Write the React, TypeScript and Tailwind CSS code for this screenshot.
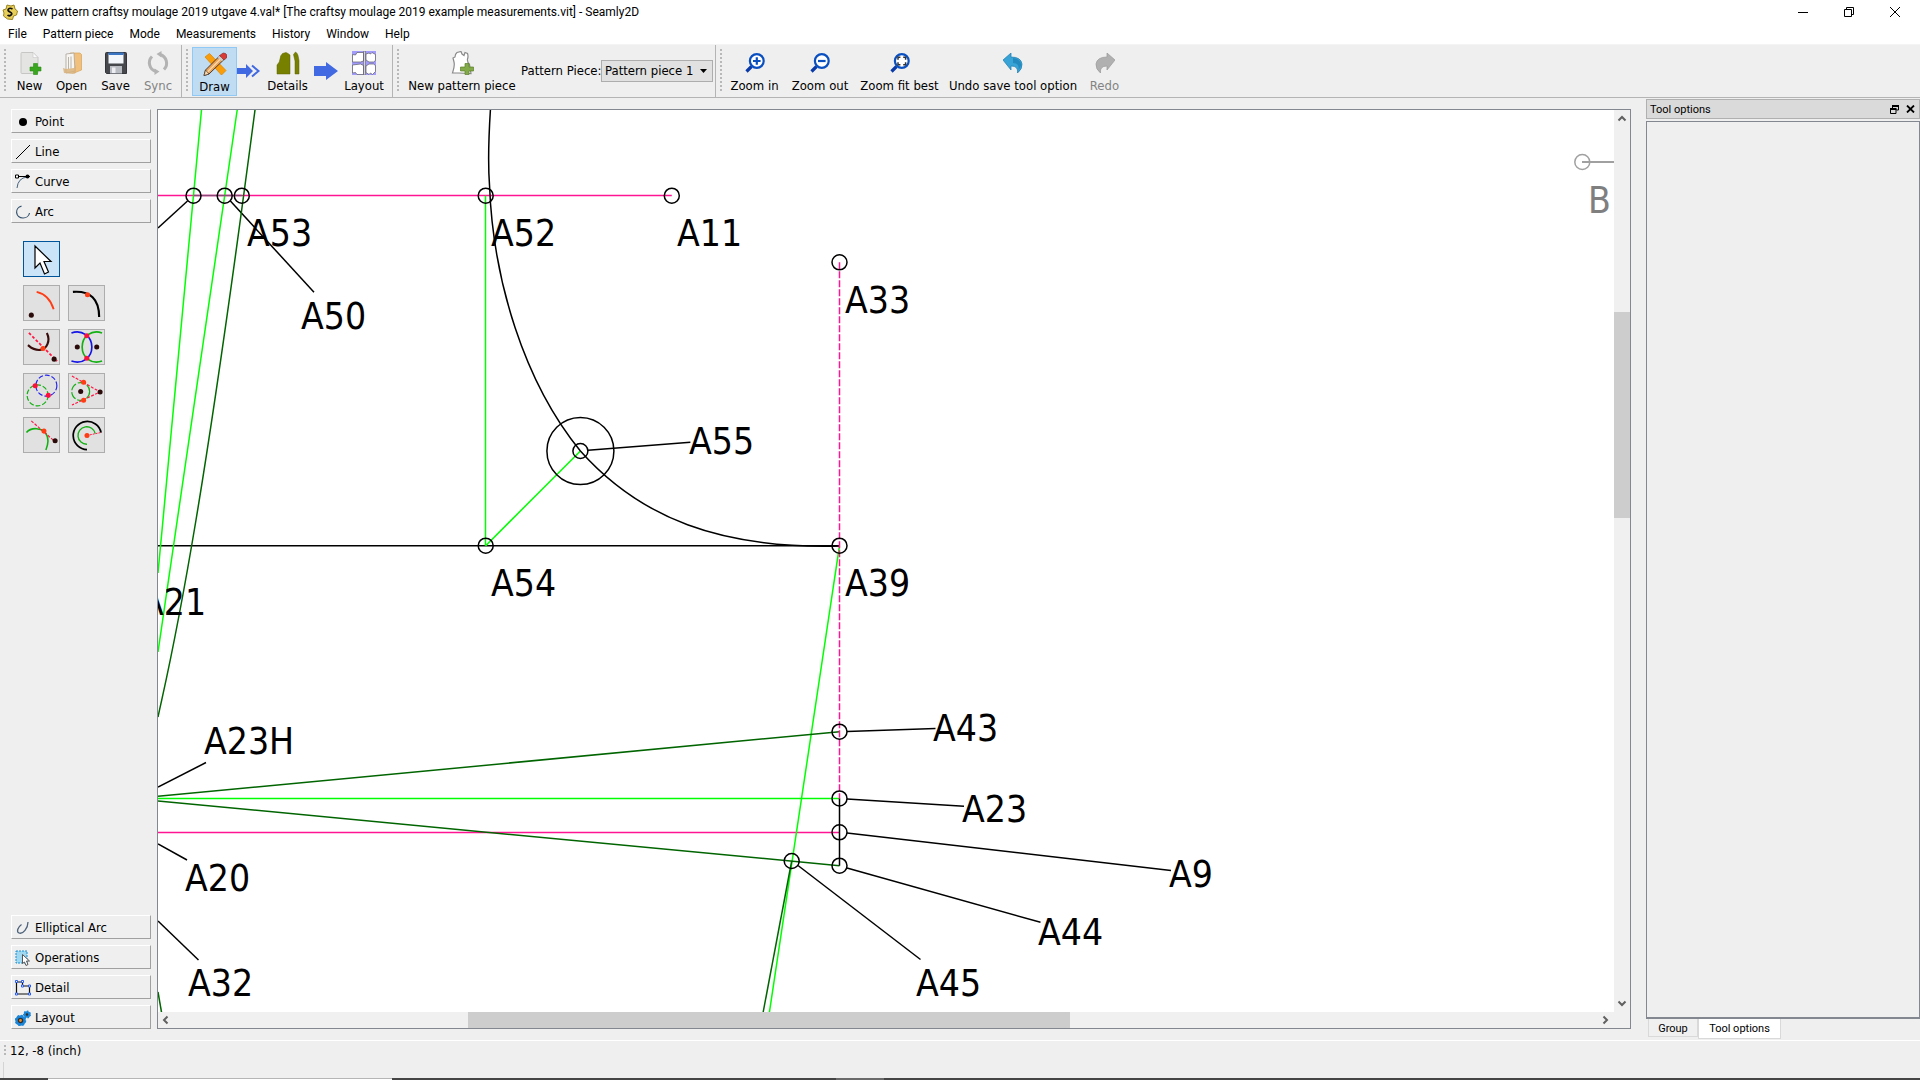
import { useState } from 'react'
import type { ReactNode } from 'react'
import clsx from 'clsx'

const MENUS = ['File', 'Pattern piece', 'Mode', 'Measurements', 'History', 'Window', 'Help']

type Stroke = 'black' | 'pink' | 'green' | 'darkgreen'

const STROKES: Record<Stroke, string> = {
  black: '#000000',
  pink: '#ff1493',
  green: '#00ff00',
  darkgreen: '#006400',
}

// x1, y1, x2, y2 in scene pixels
const LINES: { color: Stroke; at: number[] }[] = [
  { color: 'pink', at: [150, 195.5, 671.8, 195.5] },
  { color: 'pink', at: [150, 832.5, 839.5, 832.5] },
  { color: 'black', at: [150, 545.7, 839.5, 545.7] },
  { color: 'green', at: [201.5, 110, 158, 573] },
  { color: 'green', at: [237.2, 110, 158, 652] },
  { color: 'green', at: [485.5, 195.7, 485.5, 545.7] },
  { color: 'green', at: [485.7, 545.7, 580.4, 451] },
  { color: 'green', at: [150, 798.5, 839.5, 798.5] },
  { color: 'green', at: [839.5, 545.7, 769, 1015] },
  { color: 'darkgreen', at: [839.5, 731.7, 158, 796.3] },
  { color: 'darkgreen', at: [839.5, 865.7, 158, 801] },
  { color: 'darkgreen', at: [791.7, 861, 763, 1013] },
  { color: 'darkgreen', at: [158, 992, 162, 1015] },
  { color: 'black', at: [839.5, 798.4, 839.5, 865.7] },
  // label leaders
  { color: 'black', at: [187.5, 201, 158, 228] },
  { color: 'black', at: [230.4, 201, 314, 292.3] },
  { color: 'black', at: [588, 450.3, 690.4, 442.3] },
  { color: 'black', at: [847, 731.5, 935.5, 728.5] },
  { color: 'black', at: [847, 799, 964, 806.3] },
  { color: 'black', at: [847, 833, 1171, 870.5] },
  { color: 'black', at: [847, 868, 1040.5, 922.3] },
  { color: 'black', at: [798, 865.5, 920.5, 959.5] },
  { color: 'black', at: [158, 787, 206, 762.5] },
  { color: 'black', at: [158, 844, 187, 860] },
  { color: 'black', at: [158, 921, 198.5, 960] },
]

const POINTS = [
  [193.5, 195.7],
  [224.7, 195.7],
  [241.8, 195.7],
  [485.7, 195.7],
  [671.8, 195.7],
  [839.5, 262.3],
  [485.7, 545.7],
  [580.4, 451],
  [839.5, 545.7],
  [839.5, 731.7],
  [839.5, 798.4],
  [839.5, 832.3],
  [839.5, 865.7],
  [791.7, 861],
]

const LABELS = [
  { text: 'A53', x: 247, y: 246 },
  { text: 'A52', x: 491, y: 246 },
  { text: 'A11', x: 677, y: 246 },
  { text: 'A50', x: 301, y: 329 },
  { text: 'A33', x: 845, y: 313 },
  { text: 'A55', x: 689, y: 454 },
  { text: 'A54', x: 491, y: 596 },
  { text: 'A39', x: 845, y: 596 },
  { text: 'A21', x: 141, y: 615 },
  { text: 'A23H', x: 204, y: 754 },
  { text: 'A20', x: 185, y: 891 },
  { text: 'A32', x: 188, y: 996 },
  { text: 'A43', x: 933, y: 741 },
  { text: 'A23', x: 962, y: 822 },
  { text: 'A9', x: 1169, y: 887 },
  { text: 'A44', x: 1038, y: 945 },
  { text: 'A45', x: 916, y: 996 },
]

function Icon({ size = 24, box = '0 0 24 24', children }: { size?: number; box?: string; children: ReactNode }) {
  return (
    <svg width={size} height={size} viewBox={box} fill="none" className="shrink-0" aria-hidden="true">
      {children}
    </svg>
  )
}

/* ---------- toolbar icons ---------- */

const NewIcon = () => (
  <Icon>
    <path d="M3 2.500a1 1 0 0 1 1-1h11l5 5v15a1 1 0 0 1-1 1H4a1 1 0 0 1-1-1z" fill="#e4e4e2" stroke="#bdbdbb" strokeWidth=".8" />
    <path d="M15 1.500v5h5z" fill="#fafafa" stroke="#c8c8c8" strokeWidth=".6" />
    <path d="M15.500 12.500h4v3.500H23v4h-3.500V23.500h-4V20H12v-4h3.500z" fill="#3aa51f" stroke="#2a8a14" strokeWidth=".6" />
  </Icon>
)

const OpenIcon = () => (
  <Icon>
    <path d="M10 2h10l1.500 1.500V19L14 22z" fill="#f0c07c" stroke="#d9a45c" strokeWidth=".7" />
    <path d="M6 3l8-1 1 18-9 2z" fill="#f6f5f2" stroke="#a9a298" strokeWidth=".8" />
    <path d="M8.500 6v12M11 5.500v12" stroke="#b9b4ab" />
    <path d="M3 17l3 1 8-1 2-3v8l-3 1L4 22z" fill="#d9b27a" opacity=".85" />
  </Icon>
)

const SaveIcon = () => (
  <Icon>
    <path d="M1.500 2.500a1 1 0 0 1 1-1h19a1 1 0 0 1 1 1v20h-20l-1-1z" fill="#46484d" stroke="#33353a" />
    <path d="M4.500 2.500h15v10h-15z" fill="#f3f6fa" />
    <path d="M4.500 1.500h15V4h-15z" fill="#3b76c4" />
    <path d="M6 15h12v7.500H6z" fill="#b9bcc3" />
    <path d="M8 16.500h3.500V22H8z" fill="#eceef2" />
  </Icon>
)

const SyncIcon = () => (
  <Icon>
    <path d="M10 20.500A9 9 0 0 1 6 5.500" stroke="#b3b3b3" strokeWidth="3" />
    <path d="M14 3.500a9 9 0 0 1 4 15" stroke="#b3b3b3" strokeWidth="3" />
    <path d="M8.500 17.500l5 3-5 3.500zM15.500 0v6.500l-5-3.500z" fill="#b3b3b3" />
  </Icon>
)

const DrawIcon = () => (
  <Icon>
    <path d="M2 5l4.500-3.500L23 18.500 18.500 23z" fill="#f99d0a" stroke="#e08600" strokeWidth=".8" />
    <path d="M17 3.500l4 4L6 22l-5 1.500L2.500 18z" fill="#e9a35c" stroke="#3d2b1d" strokeWidth=".9" />
    <path d="M19 5.500L4.500 20" stroke="#fbd9a6" strokeWidth="1.200" />
    <path d="M2.500 18L6 22l-5 1.500z" fill="#f5d9b0" stroke="#3d2b1d" strokeWidth=".6" />
    <path d="M18 2.500q2-2.500 4.500-1t1 4.500L21 8l-4.500-4.500z" fill="#d93a37" stroke="#7e2a28" strokeWidth=".6" />
    <path d="M15.500 4.500l4 4" stroke="#c9cbd0" strokeWidth="2" />
  </Icon>
)

const DetailsIcon = () => (
  <Icon>
    <path d="M1 23V14q3-3 3-6 .5-4 2.500-5.500L10 1.500l2 1L14 4v19z" fill="#788000" stroke="#5c6200" strokeWidth=".5" />
    <path d="M17.500 3.500L19.500 1q2 1 2.500 3.500l1 5V23h-4V10z" fill="#788000" stroke="#5c6200" strokeWidth=".5" />
  </Icon>
)

const LayoutIcon = () => (
  <Icon>
    <path d="M0 0h24v24H0z" fill="#a29bfb" />
    <path
      d="M.500 3.500l3 .5L5 1.500h6.500v8.500l-3 1H.500zM14 3l3-1 1.500 1L20 1.500l3.500 2v6l-2 1.500H17l-3-2zM.500 14l8-1 3 1.500v9H5l-1.500-2-3 .5zM14 15l3-2h4.500l2 1.500v6l-3 3-2-1.500-1.500 1.500-3-2zM11.700 0h1.600v24h-1.600z"
      fill="#fff"
      stroke="#5b5b66"
      strokeWidth=".7"
    />
  </Icon>
)

const PieceIcon = () => (
  <Icon>
    <path
      d="M3 7l2-1q0-3 2-4.500l4-1L12 3l2 1.500 1-3 2.500 1q1 3 0 5.500-.5 3 2 5.500L21 22.500 9 22H2.500Q5 15 4 11z"
      fill="#fff"
      stroke="#8a8a8a"
      strokeWidth="1.200"
    />
    <path d="M15 12.500h4v3.500h4.500v4H19v3.500h-4V20h-4.500v-4H15z" fill="#82aa48" stroke="#5b7f2a" strokeWidth=".7" />
  </Icon>
)

function ZoomIcon({ children }: { children: ReactNode }) {
  return (
    <Icon size={20} box="0 0 20 20">
      <path d="M6.500 13.500L1.500 18.500" stroke="#0a3aa8" strokeWidth="3.200" />
      <circle cx="11.800" cy="8" r="6.900" fill="#fff" stroke="#0a4fc0" strokeWidth="2.200" />
      {children}
    </Icon>
  )
}

const ZoomInIcon = () => (
  <ZoomIcon>
    <path d="M8 8h7.600M11.800 4.200v7.600" stroke="#0a4fc0" strokeWidth="2.200" />
  </ZoomIcon>
)

const ZoomOutIcon = () => (
  <ZoomIcon>
    <path d="M8 8h7.600" stroke="#0a4fc0" strokeWidth="2.200" />
  </ZoomIcon>
)

const ZoomFitIcon = () => (
  <ZoomIcon>
    <path d="M8 6.700V4.300h2.400M13.200 4.300h2.400v2.400M15.600 9.300v2.400h-2.400M10.400 11.700H8V9.300" stroke="#333" strokeWidth="1.500" />
  </ZoomIcon>
)

const UndoIcon = () => (
  <Icon size={20} box="0 0 20 20">
    <path d="M0 7L8 0v4q10 0 11 7 .5 5-4.500 9 1-7-6.500-7v4z" fill="#38a3d6" stroke="#1d7cb0" strokeWidth=".7" />
    <path d="M10 5q8 1 8 7-1 4-2.500 5 1-7-5.500-7z" fill="#1878ae" opacity=".6" />
  </Icon>
)

const RedoIcon = () => (
  <Icon size={20} box="0 0 20 20">
    <path d="M20 7l-8-7v4Q2 4 1 11q-.5 5 4.500 9-1-7 6.500-7v4z" fill="#b0b0b0" stroke="#9a9a9a" strokeWidth=".7" />
  </Icon>
)

/* ---------- tool box icons ---------- */

const Dot = ({ x, y, fill = '#2b0a0a', r = 2.6 }: { x: number; y: number; fill?: string; r?: number }) => (
  <circle cx={x} cy={y} r={r} fill={fill} />
)

const CATEGORIES_TOP = [
  { name: 'Point', icon: <circle cx="8" cy="8" r="4" fill="#000" /> },
  { name: 'Line', icon: <path d="M1 15L15 1" stroke="#000" /> },
  {
    name: 'Curve',
    icon: (
      <>
        <path d="M2 14Q3 4 12 3" stroke="#44607c" />
        <path d="M1 2.500h14" stroke="#000" />
        <path d="M.500 1h3v3h-3z" fill="#fff" stroke="#000" />
        <circle cx="12.500" cy="2.500" r="2" fill="#000" />
      </>
    ),
  },
  { name: 'Arc', icon: <path d="M6.500 2.200A6.500 6 0 1 0 14.500 9" stroke="#34516e" strokeWidth="1.200" /> },
]

const CATEGORIES_BOTTOM = [
  {
    name: 'Elliptical Arc',
    icon: <path d="M6.500 4.500C3 7 1 12 4 13c4 1.500 9-5 9-11" stroke="#4e627a" strokeWidth="1.300" />,
  },
  {
    name: 'Operations',
    icon: (
      <>
        <path d="M1 1h11v12H1z" fill="#9fd8f0" stroke="#1c8fd0" strokeDasharray="2 1" />
        <path d="M7.500 4.500v9l2-1.500 1.500 3.500 2-1-1.500-3.500h3z" fill="#fff" stroke="#555" />
      </>
    ),
  },
  {
    name: 'Detail',
    icon: (
      <>
        <path d="M1.500 2h6v4h7v8h-13z" stroke="#111" strokeWidth="1.200" />
        <path
          d="M.500.500h2v2h-2zM6.500.500h2v2h-2zM6.500 5h2v2h-2zM13.500 5h2v2h-2zM.500 13h2v2h-2zM13.500 13h2v2h-2z"
          fill="#fff"
          stroke="#2a5cf0"
        />
      </>
    ),
  },
  {
    name: 'Layout',
    icon: (
      <>
        <circle cx="5.500" cy="10.500" r="4" fill="#2e2e2e" stroke="#1b86d8" strokeWidth="2.500" />
        <circle cx="5.500" cy="10.500" r="5" stroke="#1b86d8" strokeWidth="1.500" strokeDasharray="2 1.900" />
        <circle cx="12" cy="4.500" r="2.300" fill="#2e2e2e" stroke="#1b86d8" strokeWidth="2" />
        <circle cx="12" cy="4.500" r="3.300" stroke="#1b86d8" strokeWidth="1.400" strokeDasharray="1.500 1.500" />
        <circle cx="5.500" cy="10.500" r="1.400" fill="#f08a24" />
      </>
    ),
  },
]

const ARC_TOOLS = [
  {
    name: 'Arc',
    icon: (
      <>
        <path d="M12 6Q25 9 29.500 24" stroke="#ff3c14" strokeWidth="1.900" />
        <Dot x={6.5} y={30} />
      </>
    ),
  },
  {
    name: 'Point along arc',
    icon: (
      <>
        <path d="M3 6Q30 4 30 32" stroke="#000" strokeWidth="2.200" />
        <Dot x={18} y={9} fill="#ff3c14" />
      </>
    ),
  },
  {
    name: 'Point intersect arc and axis',
    icon: (
      <>
        <path d="M22.500 3c4 8 0 17-7 17.500S6 18 3 15.500" stroke="#3a0d0d" strokeWidth="2.200" />
        <path d="M4 3l29 29" stroke="#ff1744" strokeWidth="1.800" strokeDasharray="3 2" />
        <Dot x={18.5} y={19} fill="#ff3c14" />
        <Dot x={30} y={30} />
      </>
    ),
  },
  {
    name: 'Point intersect arcs',
    icon: (
      <>
        <path d="M1.500 3c11-4 21 4 21 14.500S13 36 1.500 32" stroke="#1414e6" strokeWidth="1.700" />
        <path d="M33 3c-11-4-20.500 4-20.500 14.500S22 36 33 32" stroke="#12b012" strokeWidth="1.700" />
        <Dot x={17.3} y={6} fill="#ff0f3c" />
        <Dot x={17.3} y={29} fill="#ff0f3c" />
        <Dot x={7.5} y={17.5} />
        <Dot x={27.5} y={17.5} />
      </>
    ),
  },
  {
    name: 'Point intersect circles',
    icon: (
      <>
        <circle cx="22" cy="12" r="10.800" stroke="#2424ee" strokeWidth="1.200" strokeDasharray="5 2" />
        <circle cx="13" cy="22" r="10.800" stroke="#12b012" strokeWidth="1.200" strokeDasharray="5 2" />
        <Dot x={10.5} y={12} fill="#ff0f3c" />
        <Dot x={24} y={22} fill="#ff0f3c" />
      </>
    ),
  },
  {
    name: 'Point from circle and tangent',
    icon: (
      <>
        <circle cx="11" cy="18" r="9.200" stroke="#12b012" strokeWidth="1.200" strokeDasharray="8 2" />
        <path d="M2 2l29 16.500L2 32" stroke="#ff1744" strokeWidth="1.200" strokeDasharray="3 1.500" />
        <Dot x={14} y={8.5} fill="#ff3c14" />
        <Dot x={14} y={27} fill="#ff3c14" />
        <Dot x={11} y={18} />
        <Dot x={31} y={18.5} />
      </>
    ),
  },
  {
    name: 'Point from arc and tangent',
    icon: (
      <>
        <path d="M1.500 15c5-6 16-5 20 1s2 12 0 17" stroke="#12b012" strokeWidth="1.600" />
        <path d="M6.500 3l24 21" stroke="#ff1744" strokeWidth="1.200" strokeDasharray="3 1.500" />
        <Dot x={19.5} y={13.5} fill="#ff3c14" />
        <Dot x={31} y={23.5} />
      </>
    ),
  },
  {
    name: 'Arc with given length',
    icon: (
      <>
        <path d="M17.500 32.500A14.500 14.500 0 1 1 32 15" stroke="#000" strokeWidth="1.800" />
        <path d="M17.500 27A9 9 0 1 1 26 16" stroke="#12b012" strokeWidth="1.400" />
        <path d="M17.500 18l14-3" stroke="#ff1744" strokeDasharray="2 1" />
        <Dot x={17.5} y={18} fill="#ff3c14" />
      </>
    ),
  },
]

/* ---------- widgets ---------- */

function Grip() {
  return <div className="my-1 w-[2px] self-stretch bg-[repeating-linear-gradient(#b8b8b8_0_2px,transparent_2px_4px)]" />
}

function ToolButton({
  label,
  icon,
  className,
  disabled,
}: {
  label: string
  icon: ReactNode
  className: string
  disabled?: boolean
}) {
  return (
    <button
      disabled={disabled}
      className={clsx('flex h-[49px] shrink-0 flex-col items-center whitespace-nowrap pt-1 disabled:text-[#838383]', className)}
    >
      <span className="flex h-6 items-center">{icon}</span>
      <span className="mt-[3px] leading-4">{label}</span>
    </button>
  )
}

function Toolbar() {
  return (
    <div className="flex h-[54px] shrink-0 border-y border-t-[#f4f4f4] border-b-[#b4b4b4] bg-[#efefef] text-[13px]">
      <div className="flex items-center border-r border-[#b4b4b4] pl-1">
        <Grip />
        <ToolButton label="New" className="ml-1 w-[39px]" icon={<NewIcon />} />
        <ToolButton label="Open" className="w-[45px]" icon={<OpenIcon />} />
        <ToolButton label="Save" className="w-[43px]" icon={<SaveIcon />} />
        <ToolButton label="Sync" className="mr-[2px] w-[42px]" icon={<SyncIcon />} disabled />
      </div>
      <div className="flex items-center border-r border-[#b4b4b4] pl-1">
        <Grip />
        <ToolButton label="Draw" className="ml-1 w-[45px] border border-[#90c8f6] bg-[#c0dcf3]" icon={<DrawIcon />} />
        <svg width="24" height="14" viewBox="0 0 24 14" fill="none" aria-hidden="true">
          <path d="M0 4h9V0l7 7-7 7v-4H0z" fill="#4169e1" />
          <path d="M15 1.500L21.500 7 15 12.500" stroke="#4169e1" strokeWidth="2" />
        </svg>
        <ToolButton label="Details" className="w-[53px]" icon={<DetailsIcon />} />
        <svg width="24" height="18" viewBox="0 0 24 18" fill="none" aria-hidden="true">
          <path d="M0 4h12V0l12 9-12 9v-4H0z" fill="#4169e1" />
        </svg>
        <ToolButton label="Layout" className="mr-[2px] w-[52px]" icon={<LayoutIcon />} />
      </div>
      <div className="flex items-center border-r border-[#b4b4b4] pl-1 pr-[2px]">
        <Grip />
        <ToolButton label="New pattern piece" className="ml-1 w-[118px]" icon={<PieceIcon />} />
        <label htmlFor="piece" className="w-[80px] whitespace-nowrap">
          Pattern Piece:
        </label>
        <div className="relative">
          <select
            id="piece"
            className="block h-[22px] w-[112px] appearance-none border border-[#adadad] bg-[#e1e1e1] pl-[3px] leading-4"
          >
            <option>Pattern piece 1</option>
          </select>
          <svg width="7" height="4" viewBox="0 0 7 4" className="pointer-events-none absolute right-[6px] top-[9px]" aria-hidden="true">
            <path d="M0 0h7L3.500 4z" fill="#000" />
          </svg>
        </div>
      </div>
      <div className="flex items-center pl-1">
        <Grip />
        <ToolButton label="Zoom in" className="ml-[2px] w-[61px]" icon={<ZoomInIcon />} />
        <ToolButton label="Zoom out" className="w-[70px]" icon={<ZoomOutIcon />} />
        <ToolButton label="Zoom fit best" className="w-[89px]" icon={<ZoomFitIcon />} />
        <ToolButton label="Undo save tool option" className="w-[138px]" icon={<UndoIcon />} />
        <ToolButton label="Redo" className="w-[45px]" icon={<RedoIcon />} disabled />
      </div>
    </div>
  )
}

function CategoryButton({ name, icon }: { name: string; icon: ReactNode }) {
  return (
    <button className="flex h-6 w-full items-center gap-1 border border-b-[#a0a0a0] border-l-white border-r-[#a0a0a0] border-t-white pl-[3px] pt-px text-left">
      <Icon size={16} box="0 0 16 16">
        {icon}
      </Icon>
      {name}
    </button>
  )
}

function ToolBox() {
  return (
    <aside className="flex w-[157px] shrink-0 flex-col justify-between pl-[11px] pr-[6px] text-[13px]">
      <div>
        <div className="flex flex-col gap-[6px]">
          {CATEGORIES_TOP.map((c) => (
            <CategoryButton key={c.name} name={c.name} icon={c.icon} />
          ))}
        </div>
        <div className="ml-3 mt-[18px] grid w-fit grid-cols-2 gap-2">
          <button
            aria-label="Pointer"
            className="col-span-2 flex h-9 w-[37px] items-center justify-center border border-[#005499] bg-[#cce4f7]"
          >
            <Icon size={35} box="0 0 35 35">
              <path d="M11 4v22l5-5 4.500 11 4-2-4.500-10.500h7z" fill="#fff" stroke="#000" strokeWidth="1.200" />
            </Icon>
          </button>
          {ARC_TOOLS.map((tool) => (
            <button
              key={tool.name}
              aria-label={tool.name}
              className="flex h-9 w-[37px] items-center justify-center border border-[#adadad] bg-[#e1e1e1]"
            >
              <Icon size={34} box="0 0 35 35">
                {tool.icon}
              </Icon>
            </button>
          ))}
        </div>
      </div>
      <div className="flex flex-col gap-[6px]">
        {CATEGORIES_BOTTOM.map((c) => (
          <CategoryButton key={c.name} name={c.name} icon={c.icon} />
        ))}
      </div>
    </aside>
  )
}

function Scene() {
  return (
    <svg className="h-full w-full" aria-label="Pattern drawing">
      <g transform="translate(-158 -110)" fill="none" stroke="#000" strokeWidth="1.500">
        {LINES.map((l, i) => (
          <line key={i} x1={l.at[0]} y1={l.at[1]} x2={l.at[2]} y2={l.at[3]} stroke={STROKES[l.color]} />
        ))}
        <path d="M193.500 195.500H241.800" stroke="#8a4a78" />
        <path d="M255 110C236 255 216 400 196 520S166 680 158 717" stroke={STROKES.darkgreen} />
        <path d="M490.400 110C488.500 140 488 165 489.500 185C493 280 524 382 580.400 451C640 518 720 549 839.500 546" />
        <path d="M839.500 262.300V798.400" stroke={STROKES.pink} strokeDasharray="7 2" />
        <circle cx="580.400" cy="451" r="33.500" />
        {POINTS.map(([x, y]) => (
          <circle key={`${x}-${y}`} cx={x} cy={y} r="7.500" />
        ))}
        <g stroke="#a0a0a0">
          <circle cx="1582.300" cy="162" r="7.500" />
          <path d="M1582 162H1700" strokeWidth="2" />
        </g>
      </g>
      <g transform="translate(-158 -110)" className="text-[37px]">
        {LABELS.map((l) => (
          <text key={l.text} x={l.x} y={l.y}>
            {l.text}
          </text>
        ))}
        <text x="1588" y="213" fill="#7f7f7f">
          B
        </text>
      </g>
    </svg>
  )
}

function ArrowButton({ d, label }: { d: string; label: string }) {
  return (
    <button aria-label={label} className="flex size-4 shrink-0 items-center justify-center">
      <svg width="10" height="10" viewBox="0 0 10 10" fill="none" aria-hidden="true">
        <path d={d} stroke="#606060" strokeWidth="2" />
      </svg>
    </button>
  )
}

function DrawArea() {
  return (
    <main className="grid min-w-0 flex-1 grid-cols-[1fr_16px] grid-rows-[1fr_16px] border border-[#828790] bg-[#f0f0f0]">
      <div className="min-h-0 min-w-0 overflow-hidden bg-white">
        <Scene />
      </div>
      <div className="flex flex-col">
        <ArrowButton label="Scroll up" d="M1.500 7.500L5 4l3.500 3.500" />
        <div className="grow-[186]" />
        <div className="grow-[206] bg-[#cdcdcd]" />
        <div className="grow-[477]" />
        <ArrowButton label="Scroll down" d="M1.500 2.500L5 6l3.500-3.500" />
      </div>
      <div className="flex">
        <ArrowButton label="Scroll left" d="M6.500 1.500L3 5l3.500 3.500" />
        <div className="grow-[294]" />
        <div className="grow-[602] bg-[#cdcdcd]" />
        <div className="grow-[528]" />
        <ArrowButton label="Scroll right" d="M2.500 1.500L6 5 2.500 8.500" />
      </div>
    </main>
  )
}

function Dock() {
  const [tab, setTab] = useState('Tool options')

  return (
    <aside className="flex w-[274px] shrink-0 flex-col pt-px text-[11px] [font-family:Roboto,sans-serif]">
      <div className="flex h-5 items-center border border-[#b0b0b0] bg-[#dadada] pl-[3px] pr-1">
        <span className="grow pt-[2px]">{tab}</span>
        <button aria-label="Float" className="mr-[7px]">
          <svg width="9" height="9" viewBox="0 0 9 9" fill="none" aria-hidden="true">
            <path d="M2.500 3V.500H8.500V5H6.500M.500 4H6v4.500H.500z" stroke="#000" />
            <path d="M2 1h7M0 4h6.500" stroke="#000" strokeWidth="2" />
          </svg>
        </button>
        <button aria-label="Close panel">
          <svg width="9" height="8" viewBox="0 0 9 8" aria-hidden="true">
            <path d="M1 .500l7 7M8 .500l-7 7" stroke="#000" strokeWidth="1.800" />
          </svg>
        </button>
      </div>
      <div className="mt-[2px] grow border border-b-2 border-[#828790]" />
      <div className="flex h-[21px] items-start pl-[2px]">
        {['Group', 'Tool options'].map((name) => (
          <button
            key={name}
            onClick={() => setTab(name)}
            className={clsx(
              'border border-t-0 border-[#d9d9d9] pt-[2px]',
              name === 'Group' ? 'w-[50px]' : 'w-[83px]',
              tab === name ? 'h-5 bg-white' : 'h-[18px] bg-[#f0f0f0]'
            )}
          >
            {name}
          </button>
        ))}
      </div>
    </aside>
  )
}

export default function App() {
  return (
    <div className="flex h-screen flex-col overflow-hidden bg-[#efefef] text-black [font-family:'DejaVu_Sans_Condensed','DejaVu_Sans',sans-serif]">
      <header className="bg-white text-[12px] [font-family:Roboto,sans-serif]">
        <div className="flex h-6 items-center pl-[2px] pr-5">
          <Icon size={16} box="0 0 16 16">
            <path d="M5 1l4 1 3-1 1 4 2.500 2-1 4-3 1-1 3.500-5-.5-4-3 .5-3-1-3 3-1z" fill="#e8cf5a" stroke="#9a8420" />
            <path d="M10.500 5Q8 3.500 6.500 5t1.500 3 1 3-3.500 0" stroke="#111" strokeWidth="1.700" />
          </Icon>
          <h1 className="ml-[6px] grow">
            New pattern craftsy moulage 2019 utgave 4.val* [The craftsy moulage 2019 example measurements.vit] - Seamly2D
          </h1>
          <div className="flex items-center gap-9">
            <button aria-label="Minimize">
              <svg width="10" height="10" viewBox="0 0 10 10" aria-hidden="true">
                <path d="M0 5.500h10" stroke="#000" />
              </svg>
            </button>
            <button aria-label="Restore">
              <svg width="10" height="10" viewBox="0 0 10 10" fill="none" aria-hidden="true">
                <path d="M.500 2.500h7v7h-7zM2.500 2.500v-2h7v7h-2" stroke="#000" />
              </svg>
            </button>
            <button aria-label="Close">
              <svg width="10" height="10" viewBox="0 0 10 10" aria-hidden="true">
                <path d="M0 0l10 10M10 0L0 10" stroke="#000" />
              </svg>
            </button>
          </div>
        </div>
        <nav className="flex h-5 items-center">
          {MENUS.map((m) => (
            <button key={m} className="px-2">
              {m}
            </button>
          ))}
        </nav>
      </header>
      <Toolbar />
      <div className="flex min-h-0 flex-1">
        <div className="flex min-w-0 flex-1 pb-[11px] pr-[15px] pt-[11px]">
          <ToolBox />
          <DrawArea />
        </div>
        <Dock />
      </div>
      <footer className="shrink-0 border-t border-white text-[13px]">
        <div className="flex h-5 items-center gap-1 pl-1">
          <Grip />
          <output>12, -8 (inch)</output>
        </div>
        <div className="ml-[3px] mt-px h-4 border-l border-[#d4d4d4]" />
        {/* top edge of the desktop taskbar */}
        <div className="flex h-[2px] bg-[#454545]">
          <div className="ml-12 w-[344px] border-t border-[#b5b5b5] bg-white" />
          <div className="ml-[444px] w-12 bg-[#6a6a6a]" />
        </div>
      </footer>
    </div>
  )
}
